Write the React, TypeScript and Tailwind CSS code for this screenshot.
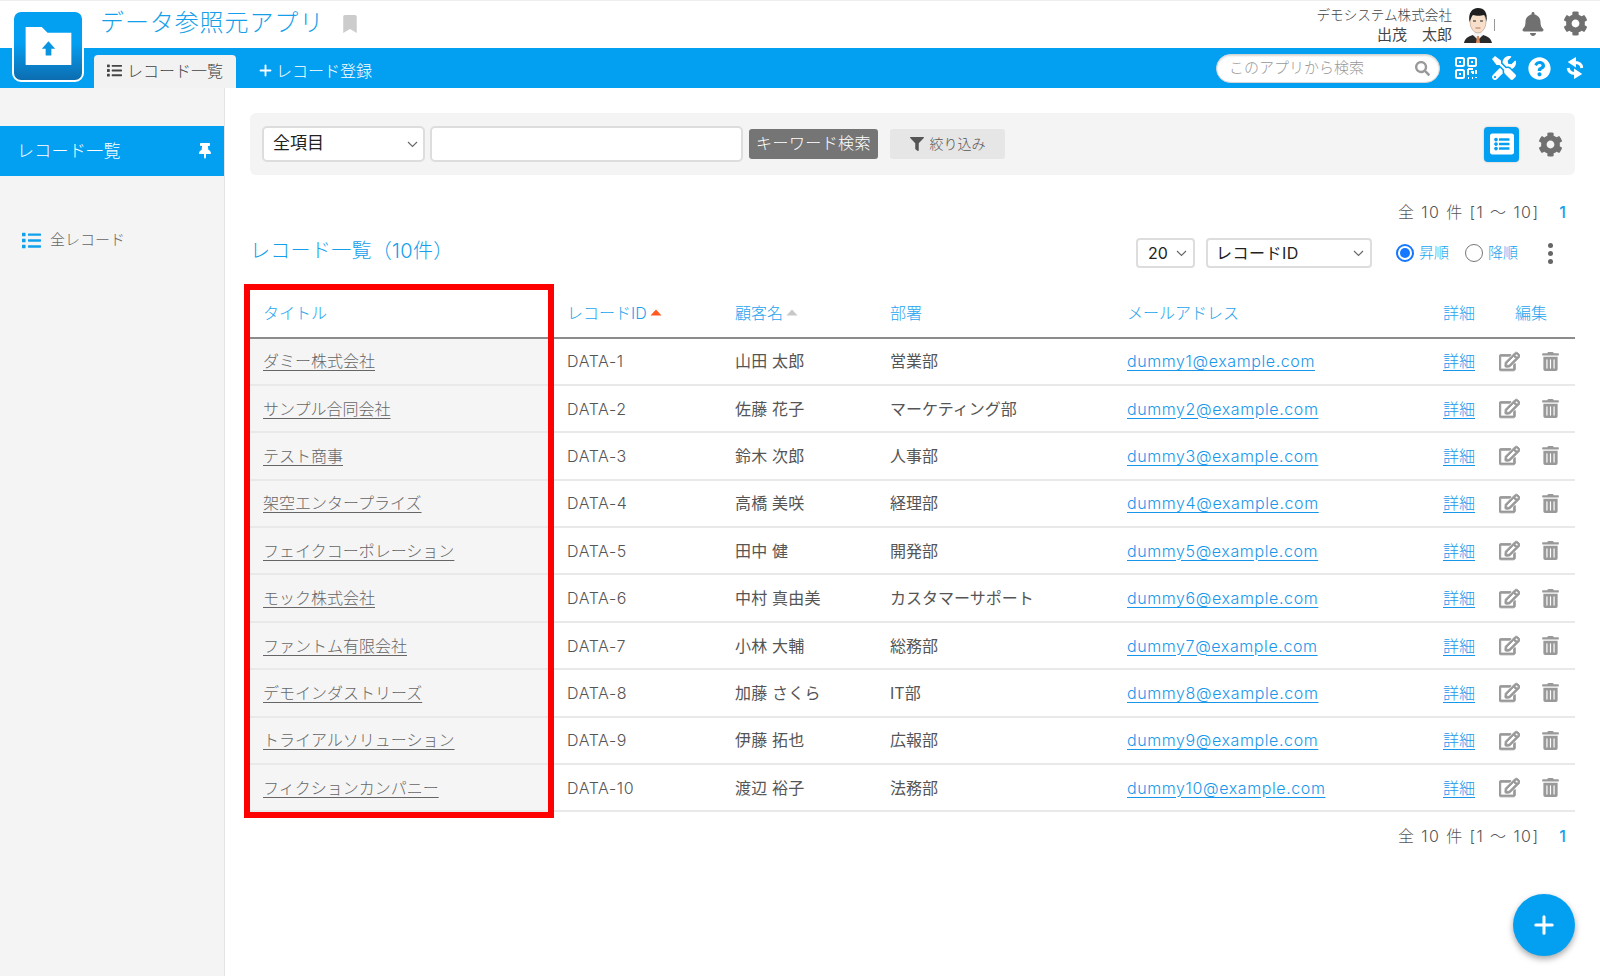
import React from "react";
import { FaBell, FaCog, FaList, FaThumbtack, FaBookmark, FaTools, FaQuestionCircle, FaRegEdit, FaTrashAlt, FaSearch, FaFilter, FaListAlt } from "react-icons/fa";
import { Plus } from "lucide-react";

const rows = [
  ["ダミー株式会社", "DATA-1", "山田 太郎", "営業部", "dummy1@example.com"],
  ["サンプル合同会社", "DATA-2", "佐藤 花子", "マーケティング部", "dummy2@example.com"],
  ["テスト商事", "DATA-3", "鈴木 次郎", "人事部", "dummy3@example.com"],
  ["架空エンタープライズ", "DATA-4", "高橋 美咲", "経理部", "dummy4@example.com"],
  ["フェイクコーポレーション", "DATA-5", "田中 健", "開発部", "dummy5@example.com"],
  ["モック株式会社", "DATA-6", "中村 真由美", "カスタマーサポート", "dummy6@example.com"],
  ["ファントム有限会社", "DATA-7", "小林 大輔", "総務部", "dummy7@example.com"],
  ["デモインダストリーズ", "DATA-8", "加藤 さくら", "IT部", "dummy8@example.com"],
  ["トライアルソリューション", "DATA-9", "伊藤 拓也", "広報部", "dummy9@example.com"],
  ["フィクションカンパニー", "DATA-10", "渡辺 裕子", "法務部", "dummy10@example.com"],
];

function Chevron() {
  return (
    <svg width="11" height="7" viewBox="0 0 11 7" fill="none" stroke="#666" strokeWidth="1.1">
      <path d="M1 1l4.500 4.500L10 1" />
    </svg>
  );
}

function Tri({ color }: { color: string }) {
  return (
    <svg width="12" height="7" viewBox="0 0 12 7" className="ml-[3px]">
      <path d="M6 0.5L11.500 6.500H0.5Z" fill={color} />
    </svg>
  );
}

function Qr() {
  return (
    <svg width="22" height="22" viewBox="0 0 22 22" fill="none" stroke="#fff" strokeWidth="2">
      <rect x="1" y="1" width="8" height="8" rx="1.500" />
      <rect x="13" y="1" width="8" height="8" rx="1.500" />
      <rect x="1" y="13" width="8" height="8" rx="1.500" />
      <rect x="4" y="4" width="2" height="2" fill="#fff" stroke="none" />
      <rect x="16" y="4" width="2" height="2" fill="#fff" stroke="none" />
      <rect x="4" y="16" width="2" height="2" fill="#fff" stroke="none" />
      <path d="M13 12h5M13 12v6M16 15h2v2M13 21h1M17 21h1M21 20v1M21 13v4" />
    </svg>
  );
}

function Swap() {
  return (
    <svg width="20" height="24" viewBox="0 0 22 26" fill="#fff">
      <path d="M18.500 13C18 8.500 15 7 11 7" fill="none" stroke="#fff" strokeWidth="3.200" />
      <path d="M12 1L12 12.500L3 6.500Z" />
      <path d="M3.500 13C4 17.500 7 19 11 19" fill="none" stroke="#fff" strokeWidth="3.200" />
      <path d="M10 13.500L10 25L19 19.500Z" />
    </svg>
  );
}

function Avatar() {
  return (
    <svg width="28" height="36" viewBox="0 0 28 36">
      <path d="M0 36c1-5 5-7 9-8l5 3 5-3c4 1 8 3 9 8z" fill="#2a2a2a" />
      <path d="M9 28l5 5 5-5-2-3h-6z" fill="#f4f4f4" />
      <path d="M13 29h2l1 7h-4z" fill="#d98a5a" />
      <ellipse cx="14" cy="15" rx="8" ry="11" fill="#f8dfca" stroke="#8a6a50" strokeWidth="0.4" />
      <path d="M5.500 15C4 6 8 1 14 1s10 4 8.500 14c-.5-3-1-6-2.500-7-3 1-8 1-11 0-1.500 1-2 4-3.500 7z" fill="#1f1f1f" />
      <path d="M9 14h3M16 14h3" stroke="#222" strokeWidth="1" />
      <path d="M11.500 21h5" stroke="#a8574a" strokeWidth="0.8" />
    </svg>
  );
}

function Pagination() {
  return (
    <div className="flex h-6 items-center justify-end pb-[2px] text-[16px] font-light text-[#555]">
      <span className="tracking-[1.4px]">全 10 件 [1 〜 10]</span>
      <span className="ml-[20px] mr-[9px] font-medium text-[#11a0ec]">1</span>
    </div>
  );
}

export default function App() {
  return (
    <div className="relative flex h-[976px] w-[1600px] flex-col overflow-hidden bg-white font-['Inter','Noto_Sans_CJK_JP',sans-serif] font-normal text-[#555]">
      {/* top header */}
      <header className="flex h-[48px] shrink-0 items-center border-t border-[#eeeeee] pl-[100px] pr-[12px]">
        <h1 className="mb-[3px] text-[24px] font-light leading-none tracking-[0.9px] text-[#159fea]">データ参照元アプリ</h1>
        <FaBookmark className="mb-[1px] ml-[17px] text-[#cccccc]" size={18} />
        <div className="ml-auto text-right leading-[20px]">
          <div className="text-[13.6px] font-light text-[#444]">デモシステム株式会社</div>
          <div className="text-[15px] text-[#444]">出茂　太郎</div>
        </div>
        <div className="ml-[12px] flex items-center">
          <Avatar />
          <span className="ml-[2px] h-[12px] w-px bg-[#999]" />
        </div>
        <FaBell className="mb-[2px] ml-[26px] text-[#707070]" size={24} />
        <FaCog className="mb-[2px] ml-[18px] text-[#707070]" size={25} />
      </header>

      {/* blue nav */}
      <nav className="flex h-[40px] shrink-0 items-end bg-[#03a0f2] pl-[94px] pr-[15px]">
        <div className="flex h-[33px] w-[142px] items-center justify-center rounded-t-[4px] bg-[#f2f2f2] pb-[2px] text-[16px] font-light text-[#444]">
          <FaList size={15} className="mr-[5px] text-[#444]" />
          レコード一覧
        </div>
        <div className="ml-[21px] flex h-[33px] items-center pb-[2px] text-[16px] font-light text-white">
          <Plus size={17} strokeWidth={2.6} className="mr-[2px]" />
          レコード登録
        </div>
        <div className="ml-auto flex h-[40px] items-center">
          <div className="flex h-[29px] w-[224px] items-center justify-between rounded-full border border-[#d6d6d6] bg-white pl-[12px] pr-[9px] text-[15px] font-light text-[#999] shadow-[inset_0_1px_2px_rgba(0,0,0,0.15)]">
            <span>このアプリから検索</span>
            <FaSearch size={15} className="text-[#999]" />
          </div>
          <span className="ml-[15px]"><Qr /></span>
          <FaTools size={24} className="ml-[15px] text-white" />
          <FaQuestionCircle size={23} className="ml-[12px] text-white" />
          <span className="ml-[14px]"><Swap /></span>
        </div>
      </nav>

      <div className="flex min-h-0 flex-1">
        {/* sidebar */}
        <aside className="w-[225px] shrink-0 border-r border-[#e4e4e4] bg-[#f4f4f4] pt-[38px]">
          <div className="flex h-[50px] items-center justify-between bg-[#03a0f2] pl-[17px] pr-[11px] text-[17px] font-light tracking-[0.3px] text-white">
            <span className="mt-[2px]">レコード一覧</span>
            <FaThumbtack size={16} />
          </div>
          <div className="mt-[53px] flex items-center pl-[22px] text-[15px] font-light text-[#666]">
            <FaList size={19} className="mr-[9px] text-[#11a0ec]" />
            全レコード
          </div>
        </aside>

        {/* main */}
        <main className="min-w-0 flex-1 pl-[25px] pr-[25px] pt-[25px]">
          <div className="flex h-[62px] items-center rounded-[6px] bg-[#f4f4f4] pl-[12px] pr-[12px]">
            <div className="flex h-[36px] w-[163px] items-center justify-between rounded-[5px] border-2 border-[#dddddd] bg-white pl-[9px] pr-[5px] text-[17px] text-[#222]">
              全項目
              <Chevron />
            </div>
            <div className="ml-[5px] h-[36px] w-[313px] rounded-[5px] border-2 border-[#dddddd] bg-white" />
            <div className="ml-[6px] flex h-[30px] w-[129px] items-center justify-center rounded-[3px] bg-[#757575] pb-[2px] text-[16px] font-light tracking-[0.4px] text-white">
              キーワード検索
            </div>
            <div className="ml-[12px] flex h-[30px] w-[115px] items-center justify-center rounded-[3px] bg-[#e6e6e6] pb-[2px] text-[14px] font-light text-[#555]">
              <FaFilter size={14} className="mr-[6px] mt-[2px]" />
              絞り込み
            </div>
            <div className="ml-auto flex h-[35px] w-[35px] items-center justify-center rounded-[4px] bg-[#03a0f2] shadow-[0_0_2px_rgba(0,0,0,0.25)]">
              <FaListAlt size={24} className="text-white" />
            </div>
            <FaCog size={25} className="ml-[19px] text-[#707070]" />
          </div>

          <div className="mt-[26px]"><Pagination /></div>

          <div className="mt-[13px] flex h-[30px] items-center">
            <h2 className="mb-[4px] text-[20px] font-light tracking-[0.3px] text-[#159fea]">レコード一覧（10件）</h2>
            <div className="ml-auto flex h-[30px] w-[59px] items-center justify-between rounded-[4px] border-2 border-[#dddddd] pl-[10px] pr-[6px] text-[16px] text-[#222]">
              20
              <Chevron />
            </div>
            <div className="ml-[11px] flex h-[30px] w-[166px] items-center justify-between rounded-[4px] border-2 border-[#dddddd] pl-[8px] pr-[6px] text-[16px] tracking-[0.5px] text-[#222]">
              レコードID
              <Chevron />
            </div>
            <div className="ml-[24px] flex h-[18px] w-[18px] items-center justify-center rounded-full border-2 border-[#1677ff]">
              <span className="h-[10px] w-[10px] rounded-full bg-[#1677ff]" />
            </div>
            <span className="ml-[5px] text-[15px] font-light text-[#1da3ee]">昇順</span>
            <div className="ml-[16px] h-[18px] w-[18px] rounded-full border-[1.5px] border-[#777]" />
            <span className="ml-[5px] text-[15px] font-light text-[#1da3ee]">降順</span>
            <div className="ml-[30px] mr-[22px] flex flex-col gap-[3px]">
              <span className="h-[5px] w-[5px] rounded-full bg-[#666]" />
              <span className="h-[5px] w-[5px] rounded-full bg-[#666]" />
              <span className="h-[5px] w-[5px] rounded-full bg-[#666]" />
            </div>
          </div>

          <div className="relative mt-[23px]">
            <div className="flex h-[47.5px] items-center border-b-2 border-[#8c8c8c] pb-[2px] text-[16px] font-light text-[#1da3ee]">
              <div className="w-[298px] shrink-0 pl-[13px]">タイトル</div>
              <div className="flex w-[174px] shrink-0 items-center pl-[19px]">レコードID<Tri color="#ff5a1f" /></div>
              <div className="flex w-[155px] shrink-0 items-center pl-[13px]">顧客名<Tri color="#c8c8c8" /></div>
              <div className="w-[237px] shrink-0 pl-[13px]">部署</div>
              <div className="w-[316px] shrink-0 pl-[13px]">メールアドレス</div>
              <div className="w-[72px] shrink-0 pl-[13px]">詳細</div>
              <div className="pl-[13px]">編集</div>
            </div>
            {rows.map((r) => (
              <div key={r[1]} className="flex h-[47.4px] items-center border-b-2 border-[#e9e9e9] text-[16px] text-[#555]">
                <div className="flex h-full w-[298px] shrink-0 items-center bg-[#f5f5f5] pl-[13px] font-light text-[#666] underline underline-offset-[3px]">{r[0]}</div>
                <div className="w-[174px] shrink-0 pl-[19px] font-light tracking-[0.6px]">{r[1]}</div>
                <div className="w-[155px] shrink-0 pl-[13px] tracking-[0.2px]">{r[2]}</div>
                <div className="w-[237px] shrink-0 pl-[13px]">{r[3]}</div>
                <div className="w-[316px] shrink-0 pl-[13px] font-light tracking-[0.6px] text-[#1897ea] underline underline-offset-[3px]">{r[4]}</div>
                <div className="w-[60px] shrink-0 pl-[13px] font-light text-[#1897ea] underline underline-offset-[3px]">詳細</div>
                <FaRegEdit size={21} stroke="currentColor" strokeWidth={24} className="ml-[9px] text-[#999999]" />
                <FaTrashAlt size={19} className="ml-[21px] text-[#999999]" />
              </div>
            ))}
            <div className="pointer-events-none absolute left-[-6px] top-[-7px] h-[534px] w-[310px] border-[6px] border-[#ff0000]" />
          </div>

          <div className="mt-[13px]"><Pagination /></div>
        </main>
      </div>

      {/* logo overlay */}
      <div className="absolute left-[12px] top-[10px] flex h-[72px] w-[72px] items-center justify-center rounded-[9px] border-[2.5px] border-white bg-gradient-to-b from-[#03a0f2] from-[45%] to-[#0c6db0]">
        <svg width="47" height="40" viewBox="0 0 48 42">
          <path d="M0 1h17l6 6h25v34H0z" fill="#fff" />
          <path d="M24 16l7 8h-4v7h-6v-7h-4z" fill="#0a95e0" />
        </svg>
      </div>

      {/* FAB */}
      <div className="absolute left-[1513px] top-[894px] flex h-[62px] w-[62px] items-center justify-center rounded-full bg-[#03a0f2] shadow-[0_3px_6px_rgba(0,0,0,0.35)]">
        <Plus size={28} strokeWidth={2.6} className="text-white" />
      </div>
    </div>
  );
}
